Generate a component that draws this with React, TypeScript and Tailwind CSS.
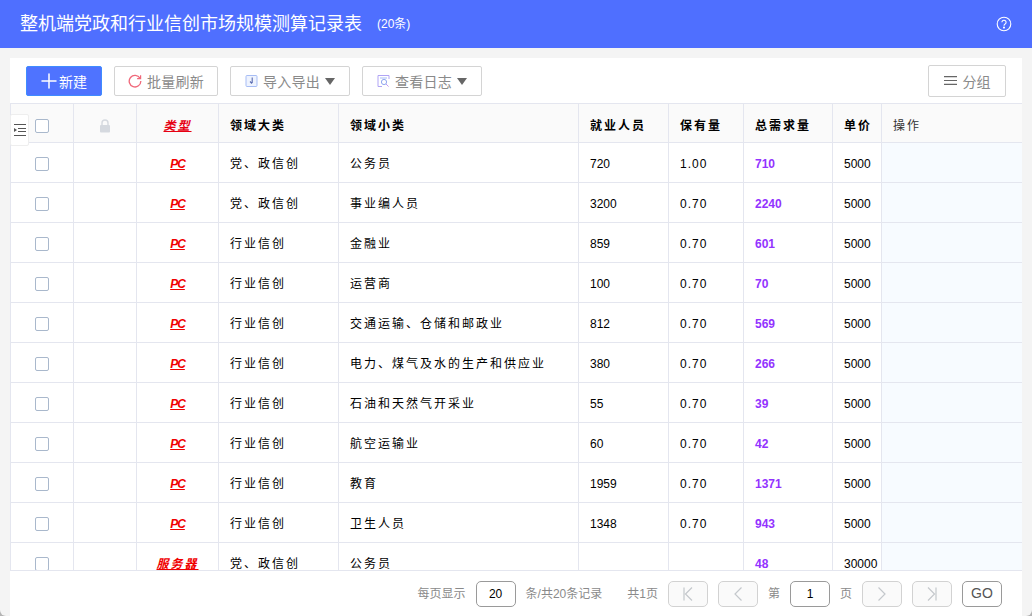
import { Plus } from "lucide-react";

const cjk = "font-['Liberation_Sans','Noto_Sans_CJK_SC',sans-serif]";

const rows = [
  { type: "PC", big: "党、政信创", small: "公务员", staff: "720", rate: "1.00", need: "710", price: "5000" },
  { type: "PC", big: "党、政信创", small: "事业编人员", staff: "3200", rate: "0.70", need: "2240", price: "5000" },
  { type: "PC", big: "行业信创", small: "金融业", staff: "859", rate: "0.70", need: "601", price: "5000" },
  { type: "PC", big: "行业信创", small: "运营商", staff: "100", rate: "0.70", need: "70", price: "5000" },
  { type: "PC", big: "行业信创", small: "交通运输、仓储和邮政业", staff: "812", rate: "0.70", need: "569", price: "5000" },
  { type: "PC", big: "行业信创", small: "电力、煤气及水的生产和供应业", staff: "380", rate: "0.70", need: "266", price: "5000" },
  { type: "PC", big: "行业信创", small: "石油和天然气开采业", staff: "55", rate: "0.70", need: "39", price: "5000" },
  { type: "PC", big: "行业信创", small: "航空运输业", staff: "60", rate: "0.70", need: "42", price: "5000" },
  { type: "PC", big: "行业信创", small: "教育", staff: "1959", rate: "0.70", need: "1371", price: "5000" },
  { type: "PC", big: "行业信创", small: "卫生人员", staff: "1348", rate: "0.70", need: "943", price: "5000" },
  { type: "服务器", big: "党、政信创", small: "公务员", staff: "", rate: "", need: "48", price: "30000" },
];

const headCell = "border-r border-[#e4e6ef] px-[11px] pt-[5px] text-[12px] font-bold tracking-[2px] whitespace-nowrap";
const bodyCell = "border-r border-b border-[#e4e6ef] px-[11px] pt-[2px] text-[12px] whitespace-nowrap";

function Checkbox() {
  return <span className="block h-[14px] w-[14px] rounded-[2px] border border-[#a9b8cc] bg-white" />;
}

function RefreshIcon() {
  return (
    <svg width="14" height="14" viewBox="0 0 14 14" fill="none">
      <path d="M12 4.2A5.8 5.8 0 1 0 12.8 7" stroke="#f0687a" strokeWidth="1.3" />
      <path d="M12.6 1.2v3.5H9.1" stroke="#f0687a" strokeWidth="1.2" />
    </svg>
  );
}

function ImportIcon() {
  return (
    <svg width="13" height="14" viewBox="0 0 13 14" fill="none">
      <rect x="1" y="1.5" width="11" height="11" rx="1" fill="#eef3fe" stroke="#a7bdf5" />
      <path d="M7.2 3.5v5.5M5 7.5l2 2" stroke="#5a6bb0" strokeWidth="1.1" />
    </svg>
  );
}

function LogIcon() {
  return (
    <svg width="13" height="14" viewBox="0 0 13 14" fill="none">
      <path d="M12 5V1.5H1v11h4" stroke="#b0a4f5" strokeWidth="1" />
      <path d="M3 4h7" stroke="#a7bdf5" />
      <circle cx="7" cy="8" r="2.6" stroke="#8fa6ef" />
      <path d="M9 10l2.6 2.6" stroke="#c49af0" />
    </svg>
  );
}

function Caret() {
  return <span className="mt-[1px] h-0 w-0 border-x-[5.5px] border-t-[7px] border-x-transparent border-t-[#666]" />;
}

function ToolButton({ width, icon, label, caret }: { width: string; icon: React.ReactNode; label: string; caret?: boolean }) {
  return (
    <button className={`flex h-[30px] ${width} items-center justify-center gap-[5px] rounded-[2px] border border-[#d4d4d4] bg-white text-[14px] text-[#8a8a8a]`}>
      {icon}
      <span className="pt-[3px] tracking-[0.3px]">{label}</span>
      {caret && <Caret />}
    </button>
  );
}

function PageButton({ d }: { d: string }) {
  return (
    <span className="flex h-[26px] w-[40px] items-center justify-center rounded-[5px] border border-[#d2d2d2] bg-[#fafafa]">
      <svg width="12" height="14" viewBox="0 0 12 14" fill="none" stroke="#c4c8cc" strokeWidth="1.2">
        <path d={d} />
      </svg>
    </span>
  );
}

function PageInput({ value }: { value: string }) {
  return (
    <span className="flex h-[26px] w-[40px] items-center justify-center rounded-[5px] border border-[#9a9a9a] bg-white text-[12px] text-black">
      {value}
    </span>
  );
}

export default function App() {
  return (
    <div className="bg-[#b4b4b4]">
      <div className={`flex h-[616px] w-[1032px] flex-col overflow-hidden rounded-b-[6px] bg-[#f4f4f4] ${cjk}`}>
        <header className="flex h-[48px] shrink-0 items-center bg-[#4f6fff] pl-[20px] pr-[20px] text-white">
          <h1 className="text-[18px] font-normal">整机端党政和行业信创市场规模测算记录表</h1>
          <span className="ml-[15px] text-[12px]">(20条)</span>
          <svg className="ml-auto" width="16" height="16" viewBox="0 0 16 16" fill="none" stroke="white" strokeWidth="1.1">
            <circle cx="8" cy="8" r="6.8" />
            <path d="M5.9 6.3a2.1 2.1 0 1 1 3.2 1.8c-.7.4-1.1.8-1.1 1.6" />
            <circle cx="8" cy="11.6" r=".5" fill="white" />
          </svg>
        </header>

        <main className="relative mx-[10px] mt-[10px] flex min-h-0 flex-1 flex-col bg-white">
          <div className="flex h-[45px] shrink-0 items-center gap-[12px] pl-[16px] pr-[16px]">
            <button className="flex h-[30px] w-[76px] items-center justify-center rounded-[2px] border border-[#3f8cff] bg-[#4f73ff] text-[14px] text-white">
              <Plus size={24} strokeWidth={1.5} className="-mx-[4px]" />
              <span className="ml-[2px] pt-[3px]">新建</span>
            </button>
            <ToolButton width="w-[104px]" icon={<RefreshIcon />} label="批量刷新" />
            <ToolButton width="w-[120px]" icon={<ImportIcon />} label="导入导出" caret />
            <ToolButton width="w-[120px]" icon={<LogIcon />} label="查看日志" caret />
            <button className="ml-auto flex h-[32px] w-[78px] items-center justify-center gap-[6px] rounded-[2px] border border-[#d4d4d4] bg-white text-[14px] text-[#8a8a8a]">
              <svg width="13" height="9" viewBox="0 0 13 9" fill="none" stroke="#666" strokeWidth="1.2">
                <path d="M0 .6h13M0 4.5h13M0 8.4h13" />
              </svg>
              <span className="pt-[3px]">分组</span>
            </button>
          </div>

          <div className="min-h-0 flex-1 overflow-hidden border-b border-[#e4e6ef]">
            <table className="w-[1012px] table-fixed border-collapse border-t border-l border-[#e4e6ef]">
              <colgroup>
                <col className="w-[63px]" />
                <col className="w-[63px]" />
                <col className="w-[82px]" />
                <col className="w-[120px]" />
                <col className="w-[240px]" />
                <col className="w-[90px]" />
                <col className="w-[75px]" />
                <col className="w-[89px]" />
                <col className="w-[49px]" />
                <col />
              </colgroup>
              <thead>
                <tr className="h-[39px] border-b border-[#e4e6ef] bg-[#fafafa] text-left text-black">
                  <th className={headCell}>
                    <div className="flex justify-center"><Checkbox /></div>
                  </th>
                  <th className={headCell}>
                    <svg className="mx-auto" width="12" height="14" viewBox="0 0 12 14" fill="none">
                      <path d="M3 6.5V4a3 3 0 0 1 6 0v2.5" stroke="#d5d9df" strokeWidth="1.4" />
                      <rect x="1" y="6" width="10" height="7.5" rx="1" fill="#d5d9df" />
                    </svg>
                  </th>
                  <th className={`${headCell} text-center italic text-[#e60012] underline`}>类型</th>
                  <th className={headCell}>领域大类</th>
                  <th className={headCell}>领域小类</th>
                  <th className={headCell}>就业人员</th>
                  <th className={headCell}>保有量</th>
                  <th className={headCell}>总需求量</th>
                  <th className={headCell}>单价</th>
                  <th className="px-[11px] pt-[5px] text-[12px] font-normal tracking-[2px] text-[#333]">操作</th>
                </tr>
              </thead>
              <tbody className="text-black">
                {rows.map((row, i) => (
                  <tr key={i} className="h-[40px]">
                    <td className={bodyCell}>
                      <div className="flex justify-center"><Checkbox /></div>
                    </td>
                    <td className={bodyCell} />
                    <td className={`${bodyCell} text-center font-bold italic text-[#f00000] underline ${row.type === "PC" ? "tracking-[-1px]" : "tracking-[2px]"}`}>
                      {row.type}
                    </td>
                    <td className={`${bodyCell} tracking-[2px]`}>{row.big}</td>
                    <td className={`${bodyCell} tracking-[2px]`}>{row.small}</td>
                    <td className={bodyCell}>{row.staff}</td>
                    <td className={`${bodyCell} tracking-[1px]`}>{row.rate}</td>
                    <td className={`${bodyCell} font-bold text-[#9333ff]`}>{row.need}</td>
                    <td className={bodyCell}>{row.price}</td>
                    <td className="border-b border-[#e4e6ef] bg-[#f7fbff]" />
                  </tr>
                ))}
              </tbody>
            </table>
          </div>

          <div className="flex h-[45px] shrink-0 items-center justify-end pr-[20px] text-[12px] text-[#8a8a8a]">
            <span>每页显示</span>
            <span className="ml-[10px]"><PageInput value="20" /></span>
            <span className="ml-[10px]">条/共20条记录</span>
            <span className="ml-[25px]">共1页</span>
            <span className="ml-[10px]"><PageButton d="M2 .5v13M10 .5 3.5 7l6.5 6.5" /></span>
            <span className="ml-[10px]"><PageButton d="M9.5.5 3 7l6.5 6.5" /></span>
            <span className="ml-[10px]">第</span>
            <span className="ml-[10px]"><PageInput value="1" /></span>
            <span className="ml-[10px]">页</span>
            <span className="ml-[10px]"><PageButton d="M2.5.5 9 7l-6.5 6.5" /></span>
            <span className="ml-[10px]"><PageButton d="M10 .5v13M2 .5 8.5 7 2 13.5" /></span>
            <span className="ml-[10px] flex h-[26px] w-[40px] items-center justify-center rounded-[5px] border border-[#9a9a9a] bg-white text-[14px] text-[#555]">GO</span>
          </div>

          <span className="absolute left-0 top-[56px] flex h-[32px] w-[19px] items-center justify-center rounded-[2px] border border-[#eeeeee] bg-white">
            <svg width="13" height="12" viewBox="0 0 13 12" fill="none" stroke="#555">
              <path d="M1 .5h12M5 4.5h8M5 7.5h8M1 11.5h12" />
              <path d="M1 4v4l3-2z" fill="#555" stroke="none" />
            </svg>
          </span>
        </main>
      </div>
    </div>
  );
}
